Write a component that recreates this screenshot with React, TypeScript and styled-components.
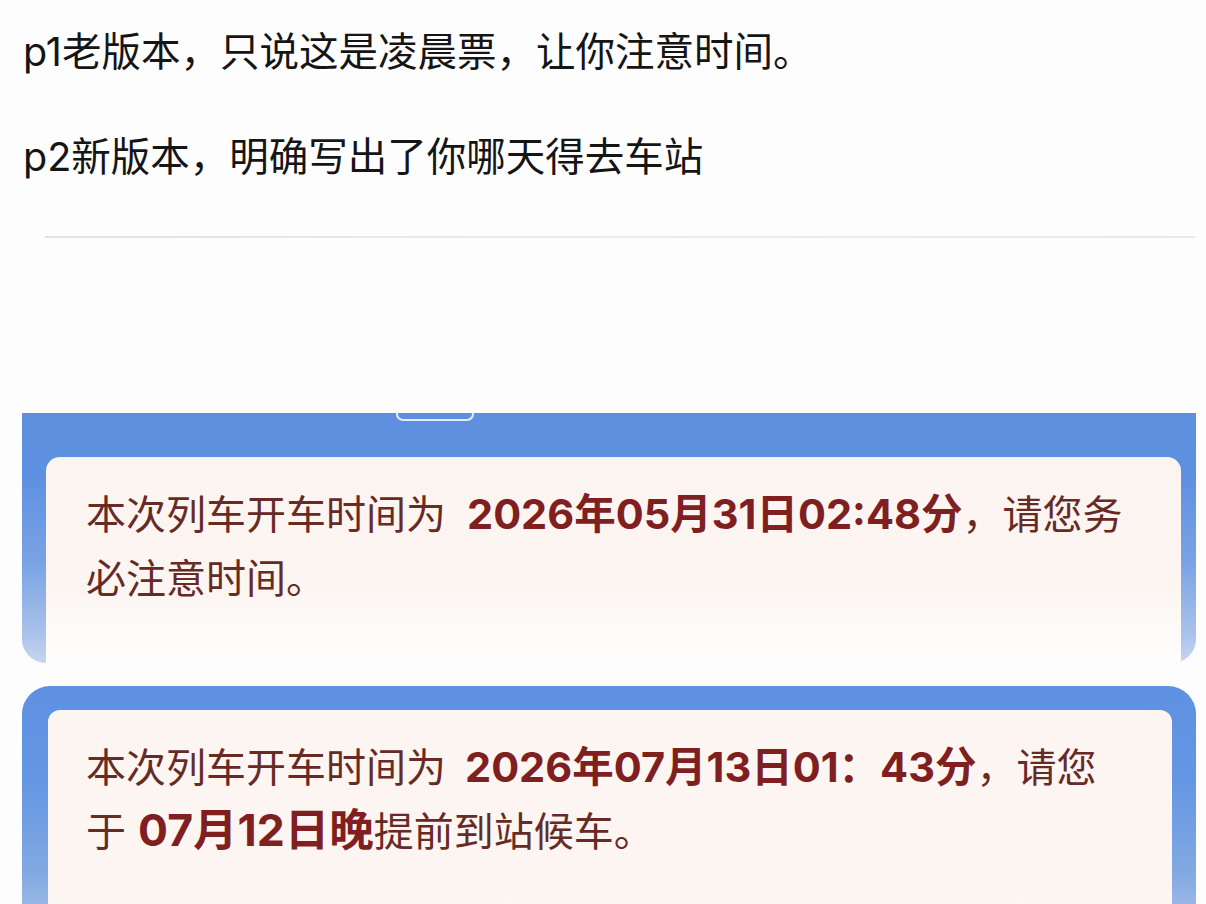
import React from "react";
import styled, { createGlobalStyle } from "styled-components";

const Global = createGlobalStyle`
  html, body {
    margin: 0;
    padding: 0;
    background: #fefdfe;
  }
  body {
    width: 1206px;
    height: 904px;
    overflow: hidden;
    font-family: Inter, "Noto Sans CJK SC", "Noto Sans", sans-serif;
  }
`;

const Page = styled.div`
  display: flex;
  flex-direction: column;
  width: 1206px;
  height: 904px;
  overflow: hidden;
  & > * {
    flex-shrink: 0;
  }
`;

const Intro = styled.section`
  display: flex;
  flex-direction: column;
  gap: 45px;
  padding: 22px 0 0 23px;
`;

const Para = styled.p`
  margin: 0;
  font-size: 39.5px;
  line-height: 60px;
  color: #151515;
  white-space: nowrap;
`;

const Divider = styled.hr`
  margin: 49px 11px 0 45px;
  height: 2px;
  border: none;
  background: linear-gradient(to right, #e4e4e4, #ececec 60%, #e8e8e8);
`;

const Card = styled.div<{ $first?: boolean }>`
  position: relative;
  display: flex;
  flex-direction: column;
  margin: ${(p) => (p.$first ? "175px 10px 0 22px" : "23px 10px 0 22px")};
  height: ${(p) => (p.$first ? "250px" : "260px")};
  padding: ${(p) => (p.$first ? "44px 15px 0 24px" : "24px 24px 0 26px")};
  box-sizing: border-box;
  border-radius: ${(p) => (p.$first ? "0 0 24px 24px" : "28px 28px 0 0")};
  background: ${(p) =>
    p.$first
      ? "linear-gradient(180deg, #5f90df 0%, #5e90e1 25%, #7aa3e5 60%, #a9c2ea 88%, #c6d6f0 100%)"
      : "linear-gradient(180deg, #5e91e2 0%, #6396e3 35%, #82a9e2 72%, #b7cbec 100%)"};
  overflow: hidden;
`;

/* small tab notch sitting on the top edge of the first card */
const Notch = styled.span`
  position: absolute;
  top: 0;
  left: 374px;
  width: 74px;
  height: 6px;
  border: 2px solid #e4ecf9;
  border-top: none;
  border-radius: 0 0 7px 7px;
`;

const Panel = styled.div<{ $first?: boolean }>`
  flex: 1;
  padding: ${(p) => (p.$first ? "25px 0 0 40px" : "26px 0 0 38px")};
  border-radius: ${(p) => (p.$first ? "14px 14px 0 0" : "12px 12px 0 0")};
  background: ${(p) =>
    p.$first
      ? "linear-gradient(180deg, #fcf4f0 0%, #fcf5f1 60%, #fdfaf8 82%, #fefdfd 100%)"
      : "linear-gradient(180deg, #fcf5f1 0%, #fcf5f1 70%, #fdf9f7 100%)"};
`;

const Notice = styled.p<{ $first?: boolean }>`
  margin: 0;
  font-size: 40px;
  line-height: ${(p) => (p.$first ? "64px" : "62px")};
  color: #672b25;
  white-space: nowrap;
`;

const Strong = styled.strong<{ $gap?: number; $size?: number }>`
  font-weight: 700;
  font-size: ${(p) => p.$size ?? 41.5}px;
  color: #7f1f1f;
  margin-left: ${(p) => p.$gap ?? 0}px;
`;

export default function App() {
  return (
    <Page>
      <Global />
      <Intro>
        <Para>p1老版本，只说这是凌晨票，让你注意时间。</Para>
        <Para>p2新版本，明确写出了你哪天得去车站</Para>
      </Intro>
      <Divider />
      <Card $first>
        <Notch />
        <Panel $first>
          <Notice $first>
            本次列车开车时间为<Strong $gap={21}>2026年05月31日02:48分</Strong>，请您务
            <br />
            必注意时间。
          </Notice>
        </Panel>
      </Card>
      <Card>
        <Panel>
          <Notice>
            本次列车开车时间为<Strong $gap={19}>2026年07月13日01：43分</Strong>，请您
            <br />于<Strong $gap={12} $size={44.5}>07月12日晚</Strong>提前到站候车。
          </Notice>
        </Panel>
      </Card>
    </Page>
  );
}
